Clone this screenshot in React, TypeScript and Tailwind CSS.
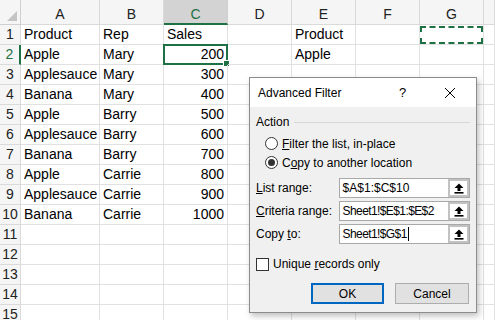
import React from "react";

const COLS = ["A", "B", "C", "D", "E", "F", "G", ""];

// sheet contents, rows 1..15
const DATA: string[][] = [
  ["Product", "Rep", "Sales", "", "Product"],
  ["Apple", "Mary", "200", "", "Apple"],
  ["Applesauce", "Mary", "300"],
  ["Banana", "Mary", "400"],
  ["Apple", "Barry", "500"],
  ["Applesauce", "Barry", "600"],
  ["Banana", "Barry", "700"],
  ["Apple", "Carrie", "800"],
  ["Applesauce", "Carrie", "900"],
  ["Banana", "Carrie", "1000"],
];

const ROWS = Array.from({ length: 15 }, (_, i) => i + 1);

function UpArrow() {
  return (
    <svg width="10" height="11" viewBox="0 0 10 11">
      <path d="M5 0.5 L9.5 5 L6.5 5 L6.5 8 L3.5 8 L3.5 5 L0.5 5 Z" fill="#000" />
      <rect x="0.5" y="9" width="9" height="1.6" fill="#000" />
    </svg>
  );
}

function RangeField({
  label,
  value,
  caret,
  tight,
}: {
  label: React.ReactNode;
  value: string;
  caret?: boolean;
  tight?: boolean;
}) {
  return (
    <div className="flex items-center h-[20px]">
      <div className="w-[83px] text-[12px] text-black">{label}</div>
      <div className="flex h-[20px] w-[132px] border border-[#a8a8a8] bg-white">
        <div
          className={`flex-1 flex items-center pl-[3px] text-[12px] text-black whitespace-nowrap ${
            tight ? "tracking-[-0.6px]" : ""
          }`}
        >
          {value}
          {caret && <span className="inline-block w-px h-[14px] bg-black ml-px" />}
        </div>
        <div className="w-[21px] flex items-center justify-center border-2 border-[#c2c2c2] bg-white">
          <UpArrow />
        </div>
      </div>
    </div>
  );
}

function Radio({ checked, children }: { checked?: boolean; children: React.ReactNode }) {
  return (
    <div className="flex items-center h-[19px] pl-[9px] gap-[4px]">
      <span className="w-[13px] h-[13px] rounded-full border border-[#333] bg-white flex items-center justify-center">
        {checked && <span className="w-[7px] h-[7px] rounded-full bg-[#333]" />}
      </span>
      <span className="text-[12px] text-black">{children}</span>
    </div>
  );
}

function AdvancedFilter() {
  return (
    <div className="absolute left-[249px] top-[77px] w-[228px] h-[236px] border border-[#8c8c8c] bg-[#f0f0f0] shadow-[2px_3px_6px_rgba(0,0,0,0.25)] flex flex-col font-['Liberation_Sans',Arial,sans-serif]">
      {/* title bar */}
      <div className="h-[29px] bg-white flex items-center pl-[8px] text-[12px] text-black">
        <span className="flex-1">Advanced Filter</span>
        <span className="w-[12px] mr-[33px] text-[13px]">?</span>
        <svg width="12" height="12" viewBox="0 0 12 12" className="mr-[20px]">
          <path d="M1 1 L11 11 M11 1 L1 11" stroke="#000" strokeWidth="1" />
        </svg>
      </div>

      <div className="flex flex-col px-[6px] pt-[7px]">
        <div className="flex items-center h-[16px] gap-[5px]">
          <span className="text-[12px] text-black">Action</span>
          <span className="flex-1 h-px bg-[#d8d8d8]" />
        </div>
        <div className="mt-[4px]">
          <Radio>
            <u>F</u>ilter the list, in-place
          </Radio>
          <Radio checked>
            C<u>o</u>py to another location
          </Radio>
        </div>

        <div className="flex flex-col gap-[3px] mt-[6px]">
          <RangeField label={<><u>L</u>ist range:</>} value="$A$1:$C$10" />
          <RangeField label={<><u>C</u>riteria range:</>} value="Sheet1!$E$1:$E$2" tight />
          <RangeField label={<>Copy <u>t</u>o:</>} value="Sheet1!$G$1" caret tight />
        </div>

        <div className="flex items-center gap-[4px] mt-[13px] h-[14px]">
          <span className="w-[13px] h-[13px] border border-[#333] bg-white" />
          <span className="text-[12px] text-black">
            Unique <u>r</u>ecords only
          </span>
        </div>

        <div className="flex justify-end gap-[11px] mt-[12px] pr-[1px]">
          <div className="w-[73px] h-[21px] border-2 border-[#0067c0] bg-[#e1e1e1] flex items-center justify-center text-[12px] text-black">
            OK
          </div>
          <div className="w-[74px] h-[21px] border border-[#adadad] bg-[#e1e1e1] flex items-center justify-center text-[12px] text-black">
            Cancel
          </div>
        </div>
      </div>
    </div>
  );
}

export default function App() {
  return (
    <div className="relative w-[495px] h-[320px] overflow-hidden bg-white font-['Liberation_Sans',Arial,sans-serif] text-[14px] text-black">
      <div className="grid grid-cols-[21px_79px_64px_64px_64px_64px_64px_64px_1fr] grid-rows-[25px_repeat(15,20px)]">
        {/* corner */}
        <div className="relative bg-[#f5f5f5] border-r border-b border-[#cfcfcf]">
          <svg width="10" height="10" viewBox="0 0 10 10" className="absolute right-[3px] bottom-[3px]">
            <path d="M10 0 L10 10 L0 10 Z" fill="#c4c4c4" />
          </svg>
        </div>
        {COLS.map((c, i) =>
          c === "C" ? (
            <div key={i} className="bg-[#d3d3d3] border-r border-[#cfcfcf] border-b-2 border-b-[#1e7145] flex items-center justify-center pt-[5px] text-[#1e7145]">
              {c}
            </div>
          ) : (
            <div key={i} className="bg-[#f5f5f5] border-r border-b border-[#dadada] flex items-center justify-center pt-[5px] text-[#222]">
              {c}
            </div>
          )
        )}

        {ROWS.map((r) => {
          const row = DATA[r - 1] ?? [];
          return (
            <React.Fragment key={r}>
              <div
                className={
                  r === 2
                    ? "bg-[#f5f5f5] border-b border-[#dadada] border-r-2 border-r-[#1e7145] flex items-center justify-center text-[#1e7145]"
                    : "bg-[#f5f5f5] border-r border-b border-[#dadada] flex items-center justify-center text-[#222]"
                }
              >
                {r}
              </div>
              {COLS.map((c, ci) => {
                const v = row[ci] ?? "";
                const numeric = ci === 2 && r > 1;
                return (
                  <div
                    key={ci}
                    className={`relative border-r border-b border-[#e1e1e1] flex items-center whitespace-nowrap ${
                      numeric ? "justify-end pr-[3px]" : "pl-[3px]"
                    }`}
                  >
                    {v}
                    {r === 2 && c === "C" && (
                      <>
                        <span className="absolute -left-px -top-px -right-px -bottom-px border-2 border-[#1e7145]" />
                        <span className="absolute -right-[3px] -bottom-[3px] w-[5px] h-[5px] bg-[#1e7145] border border-white box-content" />
                      </>
                    )}
                    {r === 1 && c === "G" && (
                      <span className="absolute left-0 top-[1px] right-0 bottom-0 border-2 border-dashed border-[#1e7145]" />
                    )}
                  </div>
                );
              })}
            </React.Fragment>
          );
        })}
      </div>

      <AdvancedFilter />
    </div>
  );
}
